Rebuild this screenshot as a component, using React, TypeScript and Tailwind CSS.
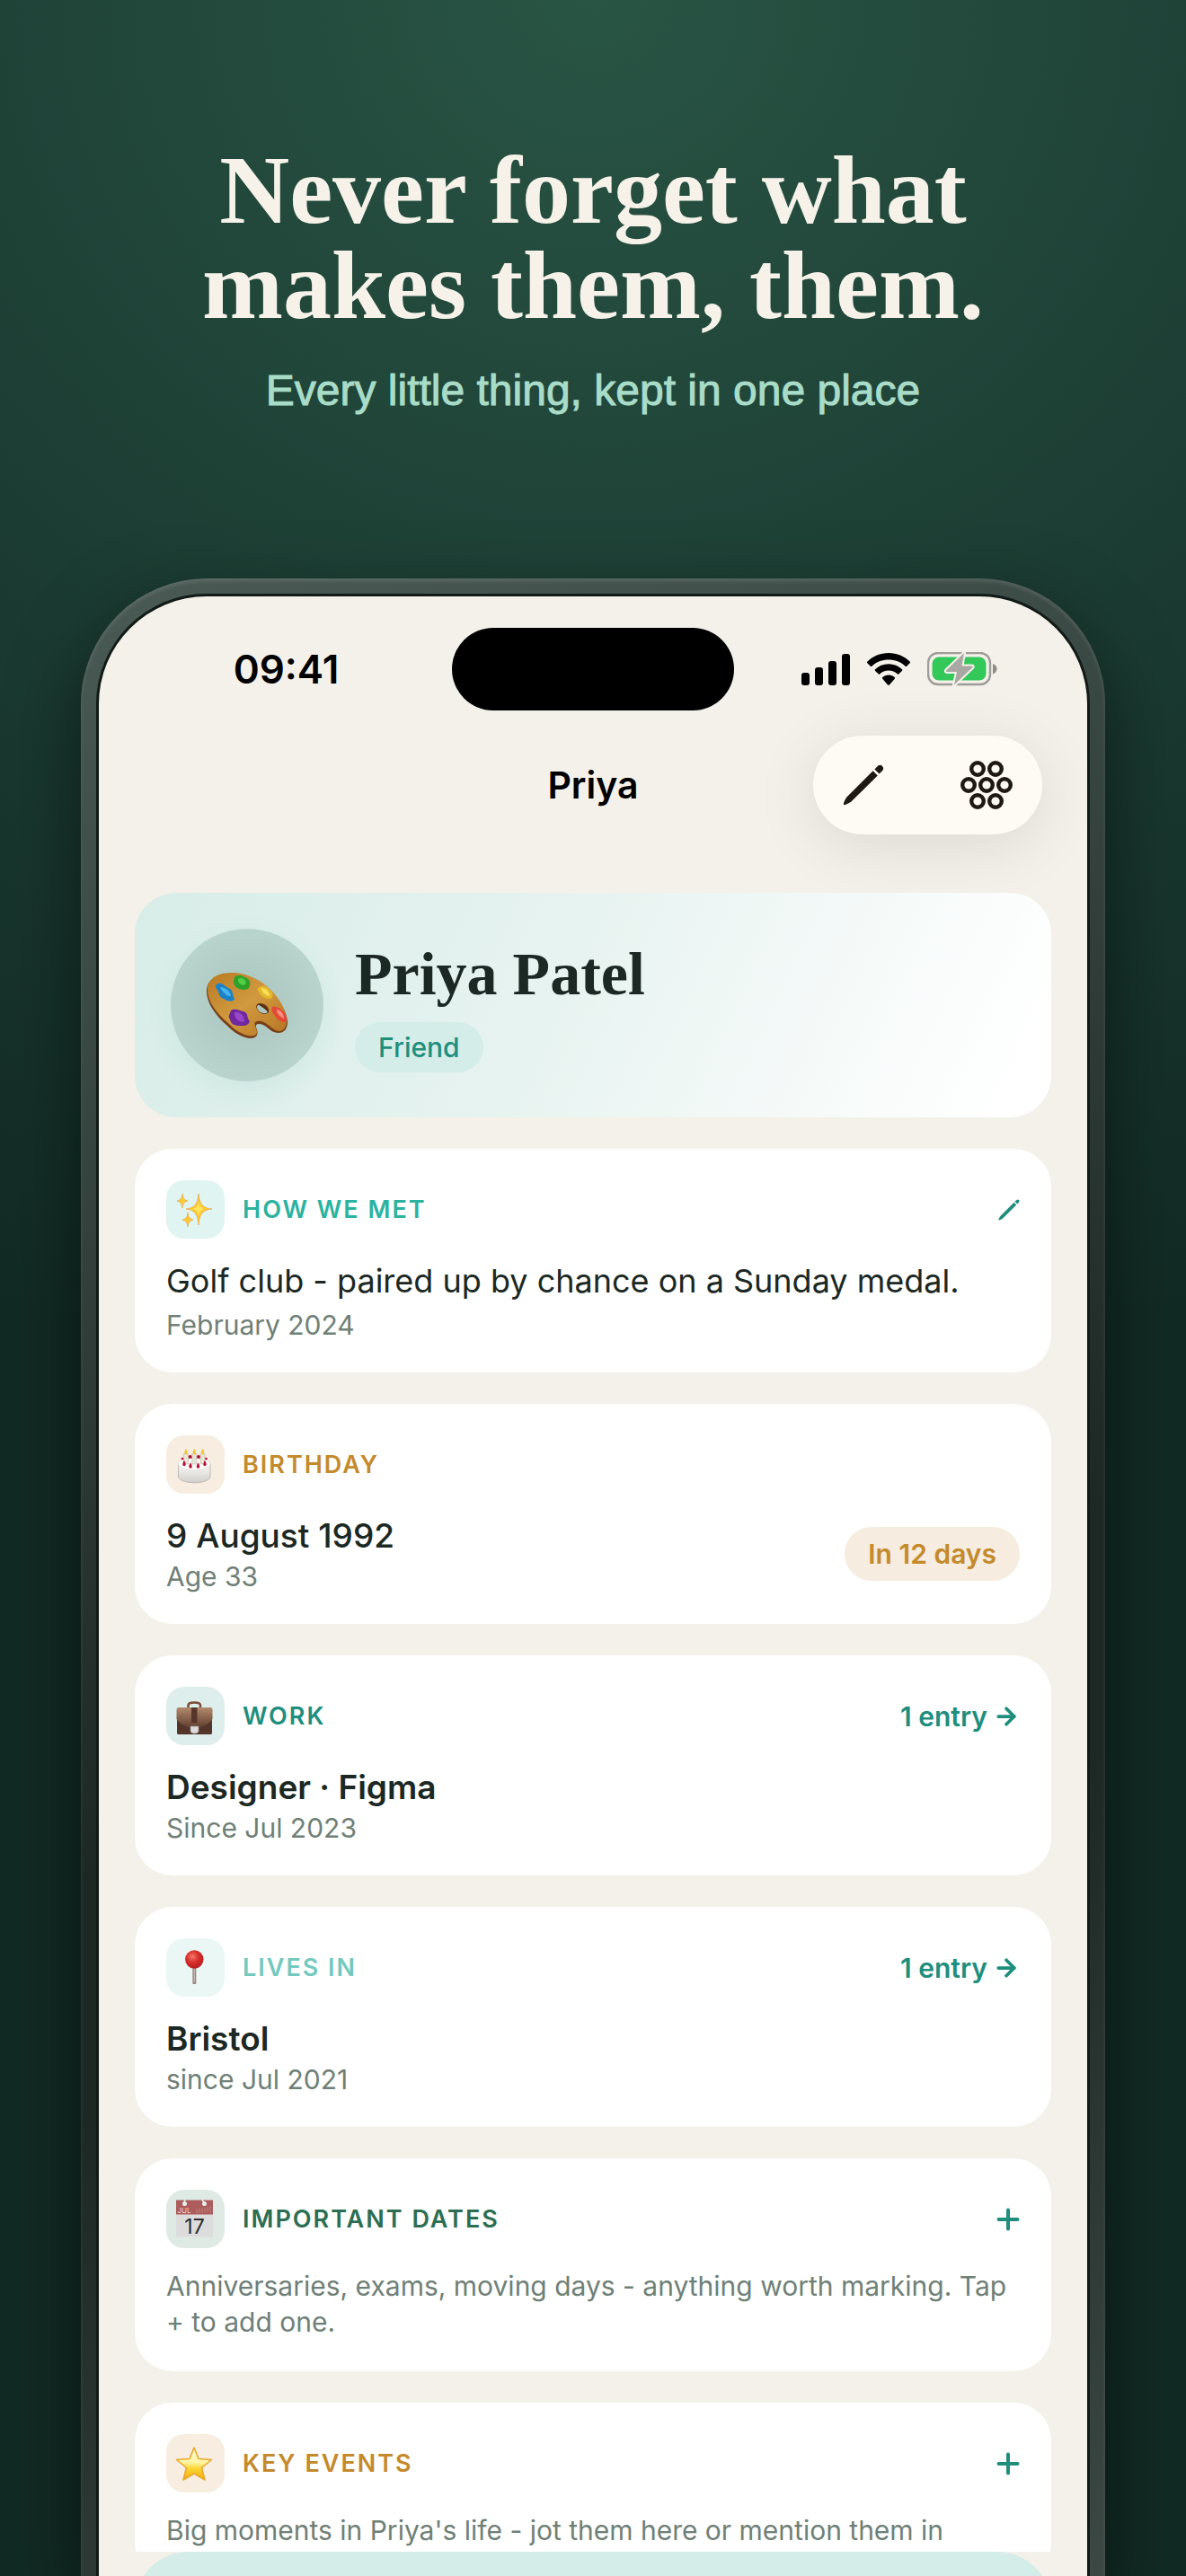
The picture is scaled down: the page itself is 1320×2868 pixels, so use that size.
import type { ReactNode } from "react";
import { ArrowRight } from "lucide-react";

function PencilIcon({ className }: { className: string }) {
  return (
    <svg viewBox="0 0 46 46" className={className} fill="currentColor" aria-hidden="true">
      <path d="M33.6 7.2 38.8 12.4 9.4 41.6C8.6 42.4 3.6 45 2.2 45.2 1.2 45.3.8 44.8.9 43.8 1.2 42.2 3.6 37.4 4.4 36.6Z" />
      <path d="M35.4 5.4 39 1.8C40.6.4 42.6.5 44 1.9 45.5 3.4 45.5 5.4 44.2 6.9L40.6 10.6Z" />
    </svg>
  );
}

const dots = [
  [19, 9],
  [39, 9],
  [9, 27],
  [29, 27],
  [49, 27],
  [19, 45],
  [39, 45],
];

function HiveIcon() {
  return (
    <svg viewBox="0 0 58 54" className="h-[54px] w-[58px]" fill="none" stroke="currentColor" strokeWidth="4.400" aria-hidden="true">
      {dots.map(([x, y]) => (
        <circle key={`${x}-${y}`} cx={x} cy={y} r="6.800" />
      ))}
    </svg>
  );
}

function SignalIcon() {
  return (
    <svg viewBox="0 0 54 36" className="h-[36px] w-[54px]" aria-hidden="true">
      <rect x="0" y="22" width="9" height="14" rx="3" />
      <rect x="15" y="16" width="9" height="20" rx="3" />
      <rect x="30" y="9" width="9" height="27" rx="3" />
      <rect x="45" y="1" width="9" height="35" rx="3" />
    </svg>
  );
}

function WifiIcon() {
  return (
    <svg viewBox="0 0 48 36" className="h-[36px] w-[48px]" aria-hidden="true">
      <path d="M24 0C33.200 0 41.600 3.500 47.600 9.600 48.100 10.100 48.100 10.700 47.600 11.200L44.200 14.700C43.700 15.200 43.100 15.200 42.600 14.700 37.600 10 31 7.500 24 7.500S10.400 10 5.400 14.700C4.900 15.200 4.300 15.200 3.800 14.700L.4 11.200C-.1 10.700-.1 10.100.4 9.600 6.400 3.500 14.800 0 24 0Z" />
      <path d="M24 12.300C29.800 12.300 35.100 14.500 39 18.200 39.500 18.700 39.500 19.300 39 19.800L35.500 23.300C35 23.800 34.500 23.800 34 23.400 31.300 21 27.800 19.600 24 19.600S16.700 21 14 23.400C13.500 23.800 13 23.800 12.500 23.300L9 19.800C8.500 19.300 8.500 18.700 9 18.200 12.900 14.500 18.200 12.300 24 12.300Z" />
      <path d="M24 24.500C26.700 24.500 29 25.500 30.700 27.100 31.200 27.600 31.200 28.200 30.800 28.700L24.900 35.400C24.300 36 23.700 36 23.100 35.400L17.200 28.700C16.800 28.200 16.800 27.600 17.300 27.100 19 25.500 21.300 24.500 24 24.500Z" />
    </svg>
  );
}

function BatteryIcon() {
  return (
    <svg viewBox="0 0 78 38" className="h-[38px] w-[78px]" aria-hidden="true">
      <rect x="1" y="1" width="69" height="35" rx="11" fill="none" stroke="#9d9c98" strokeWidth="2.400" />
      <path d="M73 13C76 14 77.500 16 77.500 18.500S76 23.500 73 24.500Z" fill="#8f8e8b" />
      <rect x="5.500" y="5.500" width="60" height="26" rx="7.500" fill="#34c759" />
      <path d="M41 1 21 20.500Q20.500 22 22 22H33L30 36.500 50.500 17Q51 15.500 49.500 15.500H38.500Z" fill="#a9a8a4" stroke="#f4f1ea" strokeWidth="4" paintOrder="stroke" strokeLinejoin="round" />
    </svg>
  );
}

function PaletteArt() {
  return (
    <svg viewBox="0 0 92 74" className="h-[74px] w-[92px]" aria-hidden="true">
      <defs>
        <linearGradient id="wood" x1="0" y1="0" x2="1" y2="1">
          <stop offset="0" stopColor="#b97a24" />
          <stop offset="0.500" stopColor="#d19a3f" />
          <stop offset="1" stopColor="#b57424" />
        </linearGradient>
      </defs>
      <path fill="#77401a" d="M1 22C1 7 15 1 32 2 62 4 90 34 91 56 91 66 84 70 76 67 70 65 66 57 58 58 52 60 61 66 56 72 50 77 35 72 24 60 10 48 1 34 1 22ZM57 39C57 43 62 47 67 46 70 45 70 42 67 39 64 36 58 35 57 39Z" fillRule="evenodd" />
      <path fillRule="evenodd" fill="url(#wood)" d="M2 20C2 5 17 0 33 1 62 3 89 31 90 54 90 64 84 68 78 65 71 62 66 53 57 55 50 57 60 65 56 70 50 74 36 69 26 58 11 45 2 33 2 20ZM56 38C56 43 62 48 67 47 71 46 71 41 68 38 64 34 57 34 56 38Z" />
      <path d="M57 36C61 34 68 37 70 43L70 46C66 41 62 38 57 36Z" fill="#5a2e10" />
      <path d="M12 14C17 10 21 16 25 18 31 20 29 25 32 30 30 35 23 32 20 30 13 28 16 22 12 19 10 17 11 15 12 14Z" fill="#1c82c8" />
      <path d="M16 17C21 17 27 21 28 27 24 28 18 22 16 17Z" fill="#48b4ec" />
      <path d="M32 6C36 2 43 5 47 8 51 11 49 15 48 18 43 22 35 19 33 16 30 13 31 9 32 6Z" fill="#2ca22a" />
      <path d="M36 8C41 5 46 10 44 14 40 16 35 12 36 8Z" fill="#54ce44" />
      <path d="M58 18C63 14 68 16 71 20 76 24 75 27 73 30 67 30 62 28 61 25 59 22 57 20 58 18Z" fill="#e5b92e" />
      <path d="M62 18C67 18 71 22 71 27 66 26 62 22 62 18Z" fill="#fae058" />
      <path d="M74 39C79 38 84 41 87 45 91 50 91 54 89 56 84 57 79 53 77 49 75 46 72 43 74 39Z" fill="#e14b35" />
      <path d="M79 42C84 43 87 47 87 52 83 50 79 47 79 42Z" fill="#ff907c" />
      <path d="M28 43C32 40 38 43 42 44 48 46 45 51 49 55 47 61 41 60 37 60 32 60 28 58 27 53 24 49 27 47 28 43Z" fill="#6f28a0" />
      <path d="M32 45C38 44 43 49 43 55 37 58 31 50 32 45Z" fill="#9847c8" />
    </svg>
  );
}

function SparklesArt() {
  return (
    <svg viewBox="0 0 65 65" className="size-full" aria-hidden="true">
      <g fill="#fccb35" stroke="#e79a3c" strokeWidth="0.600">
        <path d="M36 15C37 26 40 31 51 32 40 33 37 38 36 50 35 38 32 33 22 32 32 31 35 26 36 15Z" />
        <path d="M18 15C18.500 20 20 22 24 23 20 24 18.500 26 18 31 17.500 26 16 24 12 23 16 22 17.500 20 18 15Z" />
        <path d="M24 36C24.500 41 26 43 30 44 26 45 24.500 47 24 52 23.500 47 22 45 18 44 22 43 23.500 41 24 36Z" />
      </g>
      <path d="M36 24C36.500 29 39 31.500 43 32 39 32.500 36.500 35 36 40 35.500 35 33 32.500 29 32 33 31.500 35.500 29 36 24Z" fill="#ffe55c" />
    </svg>
  );
}

function CakeArt() {
  return (
    <svg viewBox="0 0 65 65" className="size-full" aria-hidden="true">
      <defs>
        <linearGradient id="icing" x1="0" y1="0" x2="0" y2="1">
          <stop offset="0" stopColor="#fbfaf8" />
          <stop offset="1" stopColor="#d2cfcb" />
        </linearGradient>
      </defs>
      <path d="M13.500 32V46C15 55 48 55 49 46V32Z" fill="url(#icing)" stroke="#b3afaa" strokeWidth="0.800" />
      <ellipse cx="31.200" cy="32" rx="17.800" ry="7" fill="#fdfcfa" stroke="#d6d2cd" strokeWidth="0.600" />
      <g fill="#e8e5d6" stroke="#b9b6a8" strokeWidth="0.600">
        <rect x="19.500" y="20" width="5" height="12" rx="1" />
        <rect x="28.800" y="20" width="5" height="12" rx="1" />
        <rect x="38" y="20" width="5" height="12" rx="1" />
      </g>
      <g fill="#b50f38">
        <path d="M20 28C22 31 22.500 34 20 34.300 17.500 34 18 31 20 28Z" />
        <path d="M27 30.500C29 33.500 29.500 36.500 27 36.800 24.500 36.500 25 33.500 27 30.500Z" />
        <path d="M35.500 30.500C37.500 33.500 38 36.500 35.500 36.800 33 36.500 33.500 33.500 35.500 30.500Z" />
        <path d="M43 28C45 31 45.500 34 43 34.300 40.500 34 41 31 43 28Z" />
        <circle cx="18" cy="26" r="1.300" />
        <circle cx="26.700" cy="24" r="2" />
        <circle cx="36" cy="24" r="2" />
        <circle cx="44.500" cy="26" r="1.300" />
      </g>
      <g fill="#ecc93a">
        <path d="M22 15C24 18 24.500 21 22 21.500 19.500 21 20 18 22 15Z" />
        <path d="M31.300 15C33.300 18 33.800 21 31.300 21.500 28.800 21 29.300 18 31.300 15Z" />
        <path d="M40.500 15C42.500 18 43 21 40.500 21.500 38 21 38.500 18 40.500 15Z" />
      </g>
    </svg>
  );
}

function BriefcaseArt() {
  return (
    <svg viewBox="0 0 65 65" className="size-full" aria-hidden="true">
      <defs>
        <linearGradient id="flap" x1="0" y1="0" x2="0" y2="1">
          <stop offset="0" stopColor="#b28a6e" />
          <stop offset="1" stopColor="#5f3c2d" />
        </linearGradient>
      </defs>
      <path d="M24.500 24V20.500C24.500 16.500 38 16.500 38 20.500V24" fill="none" stroke="#7a4e38" strokeWidth="2.600" />
      <path d="M12 25H51V51C51 52.500 50.500 53 49 53H14C12.500 53 12 52.500 12 51Z" fill="#54352a" />
      <path d="M14 23H49C51 23 51.500 24 51.500 26V36C47 42 40 46 31.500 46S16 42 11.500 36V26C11.500 24 12 23 14 23Z" fill="url(#flap)" />
      <rect x="28" y="23" width="6.500" height="17" fill="#56362a" />
      <path d="M27 44H36V49C36 53 27 53 27 49Z" fill="#dcdadb" stroke="#9b9797" strokeWidth="0.600" />
    </svg>
  );
}

function PinArt() {
  return (
    <svg viewBox="0 0 65 65" className="size-full" aria-hidden="true">
      <defs>
        <radialGradient id="pin" cx="0.400" cy="0.350" r="0.650">
          <stop offset="0" stopColor="#f2766a" />
          <stop offset="0.500" stopColor="#d92f2c" />
          <stop offset="1" stopColor="#b31f22" />
        </radialGradient>
      </defs>
      <rect x="29.300" y="31" width="4" height="20" rx="1.200" fill="#98867f" />
      <rect x="30.600" y="33" width="1.200" height="16" fill="#c9bcb6" />
      <circle cx="31.300" cy="23.500" r="10.200" fill="url(#pin)" />
    </svg>
  );
}

function CalendarArt() {
  return (
    <svg viewBox="0 0 65 65" className="size-full" aria-hidden="true">
      <rect x="11" y="11.500" width="41" height="41" fill="#dcdcdc" />
      <path d="M11 11.500H52V27.500H11Z" fill="#ac5c5c" />
      <circle cx="20.500" cy="15.500" r="2.500" fill="#e9f0ec" />
      <circle cx="42.500" cy="15.500" r="2.500" fill="#e9f0ec" />
      <path d="M20.500 11V15M40 11 42.500 15" stroke="#e9f0ec" strokeWidth="1.500" />
      <path d="M34 21V26M37 20V26M40 20V26M43 20V25M46 19V25M49 18V25" stroke="#c48a89" strokeWidth="0.800" />
      <text x="12.500" y="25.500" fontSize="8" fontFamily="Inter" fill="#ecd6d6">JUL</text>
      <text x="31.500" y="48.500" fontSize="23" fontFamily="Inter" textAnchor="middle" fill="#2c2c2c">17</text>
    </svg>
  );
}

function StarArt() {
  return (
    <svg viewBox="0 0 65 65" className="size-full" aria-hidden="true">
      <defs>
        <linearGradient id="star" x1="0" y1="0" x2="0" y2="1">
          <stop offset="0" stopColor="#fff6c8" />
          <stop offset="0.450" stopColor="#fff5a8" />
          <stop offset="0.650" stopColor="#fbd733" />
          <stop offset="1" stopColor="#f3a80f" />
        </linearGradient>
      </defs>
      <path d="M31 15 36 27.500 50.500 28.500 39.500 37.500 43 51 31 44 19 51 22.500 37.500 11.500 28.500 26 27.500Z" fill="url(#star)" stroke="#e9aa2c" strokeWidth="1.600" strokeLinejoin="round" />
    </svg>
  );
}

interface SectionProps {
  title: string;
  titleClass: string;
  tileClass: string;
  art: ReactNode;
  action?: ReactNode;
  children: ReactNode;
}

function Section({ title, titleClass, tileClass, art, action, children }: SectionProps) {
  return (
    <section className="shrink-0 rounded-[42px] bg-white p-[35px]">
      <div className="flex items-center gap-5">
        <div className={`size-[65px] shrink-0 overflow-hidden rounded-[20px] ${tileClass}`}>{art}</div>
        <h2 className={`grow text-[27px] leading-9 font-semibold tracking-[2px] uppercase ${titleClass}`}>{title}</h2>
        {action}
      </div>
      {children}
    </section>
  );
}

function EntryLink() {
  return (
    <a href="#entries" className="flex items-center gap-1.5 text-[30px] leading-9 font-semibold text-[#1f8e7d]">
      1 entry
      <ArrowRight className="size-[30px]" strokeWidth={3} />
    </a>
  );
}

function AddButton({ label }: { label: string }) {
  return (
    <button type="button" aria-label={label} className="text-[#1f8e7d]">
      <svg viewBox="0 0 26 26" className="size-[26px]" stroke="currentColor" strokeWidth="4" strokeLinecap="round" aria-hidden="true">
        <path d="M13 2.500V23.500M2.500 13H23.500" />
      </svg>
    </button>
  );
}

export default function App() {
  return (
    <main className="flex h-screen flex-col overflow-hidden bg-[radial-gradient(ellipse_130%_55%_at_50%_0%,#295545_0%,#1c3d33_50%,#122a24_100%)] font-['Inter',sans-serif]">
      <header className="px-10 pt-[159px] text-center">
        <h1 className="font-['Liberation_Serif',serif] text-[108px] leading-[106px] font-bold text-[#f6f2e9]">
          Never forget what
          <br />
          makes them, them.
        </h1>
        <p className="mt-9 font-['Liberation_Sans',sans-serif] text-[48px] leading-[56px] text-[#a8dcc8] [-webkit-text-stroke:1px_#a8dcc8]">
          Every little thing, kept in one place
        </p>
      </header>

      <div className="mx-[90px] mt-[181px] flex min-h-0 grow flex-col rounded-t-[140px] bg-[linear-gradient(160deg,#4a5a54_0%,#1d2724_55%,#1d2724_65%,#3c4843_100%)] px-[17px] pt-[17px] shadow-[0_30px_80px_rgba(0,0,0,0.5),inset_0_3px_4px_rgba(255,255,255,0.12)]">
        <div className="flex min-h-0 grow flex-col overflow-hidden rounded-t-[123px] border-x-[3px] border-t-[3px] border-[#111a17] bg-[#f4f1ea]">
          <div className="mt-[35px] grid shrink-0 grid-cols-[1fr_314px_1fr] items-center">
            <span className="pl-6 text-center text-[44px] leading-[56px] font-semibold text-black">09:41</span>
            <span className="h-[92px] rounded-full bg-black" />
            <div className="flex items-center justify-center gap-[19px] pr-[26px]">
              <SignalIcon />
              <WifiIcon />
              <BatteryIcon />
            </div>
          </div>

          <nav className="mt-7 grid shrink-0 grid-cols-[1fr_auto_1fr] items-center px-[50px]">
            <span className="col-start-2 text-[41px] leading-[52px] font-semibold text-black">Priya</span>
            <div className="flex h-[110px] w-[255px] items-center justify-between justify-self-end rounded-full bg-[#fefbf4] px-[33px] text-[#1e1a13] shadow-[0_12px_70px_rgba(0,0,0,0.1)]">
              <button type="button" aria-label="Edit contact">
                <PencilIcon className="size-[46px]" />
              </button>
              <button type="button" aria-label="Open circle">
                <HiveIcon />
              </button>
            </div>
          </nav>

          <div className="mt-[65px] flex min-h-0 grow flex-col gap-[35px] overflow-hidden px-10">
            <section className="flex shrink-0 items-center gap-[35px] rounded-[46px] bg-[linear-gradient(115deg,#d8ede8_0%,#e7f3f0_45%,#ffffff_95%)] p-10">
              <div className="flex size-[170px] items-center justify-center rounded-full bg-[radial-gradient(circle,#a9c5be_0%,#b9d3cd_70%)] shadow-[0_10px_30px_rgba(31,142,125,0.08)]">
                <PaletteArt />
              </div>
              <div className="flex flex-col items-start gap-3.5">
                <h2 className="font-['Liberation_Serif',serif] text-[68px] leading-[80px] font-bold text-[#1b2823]">Priya Patel</h2>
                <span className="rounded-full bg-[#d4ede8] px-[26px] py-2.5 text-[30px] leading-9 font-medium text-[#1f8e7d]">Friend</span>
              </div>
            </section>

            <Section
              title="How we met"
              titleClass="text-[#2bb3a0]"
              tileClass="bg-[#e0f4f1]"
              art={<SparklesArt />}
              action={
                <button type="button" aria-label="Edit how we met" className="text-[#1f8e7d]">
                  <PencilIcon className="size-6" />
                </button>
              }
            >
              <p className="mt-6 text-[36px] leading-[46px] text-[#1b2823]">Golf club - paired up by chance on a Sunday medal.</p>
              <p className="mt-2 text-[30px] leading-9 text-[#6f8077]">February 2024</p>
            </Section>

            <Section title="Birthday" titleClass="text-[#c48a2c]" tileClass="bg-[#f7ede1]" art={<CakeArt />}>
              <div className="mt-6 flex items-center justify-between">
                <div>
                  <p className="text-[37px] leading-[46px] font-medium text-[#1b2823]">9 August 1992</p>
                  <p className="mt-1 text-[30px] leading-9 text-[#6f8077]">Age 33</p>
                </div>
                <span className="rounded-full bg-[#f6ecdf] px-[26px] py-3 text-[30px] leading-9 font-semibold text-[#c48a2c]">In 12 days</span>
              </div>
            </Section>

            <Section title="Work" titleClass="text-[#1f8e7d]" tileClass="bg-[#deeeec]" art={<BriefcaseArt />} action={<EntryLink />}>
              <p className="mt-6 text-[37px] leading-[46px] font-semibold text-[#1b2823]">Designer · Figma</p>
              <p className="mt-1 text-[30px] leading-9 text-[#6f8077]">Since Jul 2023</p>
            </Section>

            <Section title="Lives in" titleClass="text-[#74c9bf]" tileClass="bg-[#ebf7f5]" art={<PinArt />} action={<EntryLink />}>
              <p className="mt-6 text-[37px] leading-[46px] font-semibold text-[#1b2823]">Bristol</p>
              <p className="mt-1 text-[30px] leading-9 text-[#6f8077]">since Jul 2021</p>
            </Section>

            <Section
              title="Important dates"
              titleClass="text-[#2d6e52]"
              tileClass="bg-[#e0eae5]"
              art={<CalendarArt />}
              action={<AddButton label="Add important date" />}
            >
              <p className="mt-[22px] text-[30px] leading-10 text-[#6f8077]">
                Anniversaries, exams, moving days - anything worth marking. Tap + to add one.
              </p>
            </Section>

            <Section
              title="Key events"
              titleClass="text-[#c48a2c]"
              tileClass="bg-[#f7ede1]"
              art={<StarArt />}
              action={<AddButton label="Add key event" />}
            >
              <p className="mt-[22px] text-[30px] leading-10 text-[#6f8077]">Big moments in Priya's life - jot them here or mention them in</p>
            </Section>
          </div>

          <div className="h-[27px] shrink-0 overflow-hidden px-10">
            <div className="h-[120px] rounded-[60px] bg-[#d4ede8]" />
          </div>
        </div>
      </div>
    </main>
  );
}
